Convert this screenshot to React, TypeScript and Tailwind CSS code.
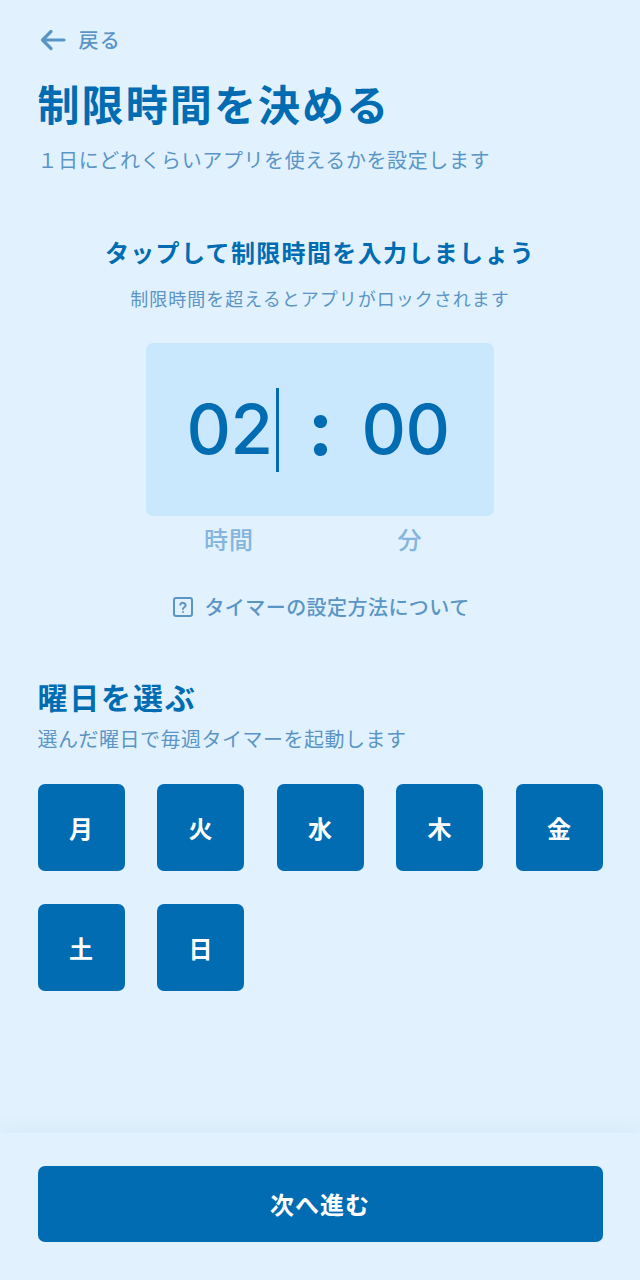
export default function App() {
  const days = ["月", "火", "水", "木", "金", "土", "日"];
  return (
    <div className="w-[640px] h-[1280px] bg-[#e1f2fe] flex flex-col font-['Noto_Sans_CJK_JP','Noto_Sans',sans-serif] text-[#016cb2]">
      <main className="flex-1 px-[37.5px]">
        <div className="flex items-center h-[30px] mt-[25px] text-[#5b95c6]">
          <svg width="26" height="22" viewBox="0 0 26 22" fill="none" stroke="currentColor" strokeWidth="3.2" strokeLinecap="round" strokeLinejoin="round" className="ml-[2px]">
            <path d="M24 11H2.5M11 2.5 2.5 11l8.500 8.500" />
          </svg>
          <span className="ml-[13px] text-[20px] font-medium tracking-[1.2px] leading-[30px]">戻る</span>
        </div>
        <h1 className="mt-[18px] text-[42px] font-bold leading-[60px] tracking-[2.1px]">制限時間を決める</h1>
        <p className="mt-[12px] text-[20px] leading-[30px] tracking-[0.6px] text-[#5b95c6]">１日にどれくらいアプリを使えるかを設定します</p>

        <h2 className="mt-[59px] text-center text-[24px] font-bold leading-[36px] tracking-[1.35px]">タップして制限時間を入力しましょう</h2>
        <p className="mt-[15px] text-center text-[18px] leading-[27px] tracking-[1px] text-[#5b95c6]">制限時間を超えるとアプリがロックされます</p>

        <div className="mx-auto mt-[31px] w-[348px] h-[173px] pr-[4px] rounded-[7px] bg-[#c9e8fe] flex items-center justify-center font-['Inter',sans-serif] font-[550] text-[69px] leading-none">
          <span className="tracking-[-0.5px]">02</span>
          <span className="w-[3px] h-[84px] bg-[#016cb2] ml-[4px]" />
          <span className="ml-[28px] mr-[28px] mb-[6px] text-[78px] font-bold">:</span>
          <span className="tracking-[-0.5px]">00</span>
        </div>
        <div className="mx-auto w-[348px] grid grid-cols-[166px_166px] gap-x-[15px] text-[24px] font-medium leading-[36px] tracking-[1px] text-[#85b5dd] mt-[5px]">
          <span className="text-center">時間</span>
          <span className="text-center">分</span>
        </div>

        <div className="mt-[35px] flex items-center justify-center gap-[10px] text-[#5b95c6]">
          <svg width="22" height="22" viewBox="0 0 22 22" fill="none" stroke="currentColor" strokeWidth="2" strokeLinecap="round" strokeLinejoin="round" className="ml-[2px]">
            <rect x="2" y="2" width="18" height="18" rx="2" />
            <path d="M8.3 8.700a2.800 2.800 0 0 1 5.400.6c0 1.800-2.700 2-2.700 3.700" />
            <path d="M11 16v.1" />
          </svg>
          <span className="text-[20px] font-medium leading-[30px] tracking-[0.45px]">タイマーの設定方法について</span>
        </div>

        <h2 className="mt-[53px] text-[30px] font-bold leading-[42px] tracking-[1.8px]">曜日を選ぶ</h2>
        <p className="mt-[7px] text-[20px] leading-[30px] tracking-[0.5px] text-[#5b95c6]">選んだ曜日で毎週タイマーを起動します</p>

        <div className="mt-[30px] grid grid-cols-5 gap-x-[32.5px] gap-y-[33px]">
          {days.map((d) => (
            <button key={d} className="aspect-square rounded-[7px] bg-[#016cb2] text-white text-[24px] font-bold flex items-center justify-center">
              {d}
            </button>
          ))}
        </div>
      </main>
      <footer className="h-[147px] shrink-0 px-[37.5px] pt-[33px] bg-[#e1f2fe] shadow-[0_-6px_18px_rgba(1,60,100,0.045)]">
        <button className="w-full h-[76px] rounded-[7px] bg-[#016cb2] text-white text-[24px] font-bold tracking-[1px]">次へ進む</button>
      </footer>
    </div>
  );
}
